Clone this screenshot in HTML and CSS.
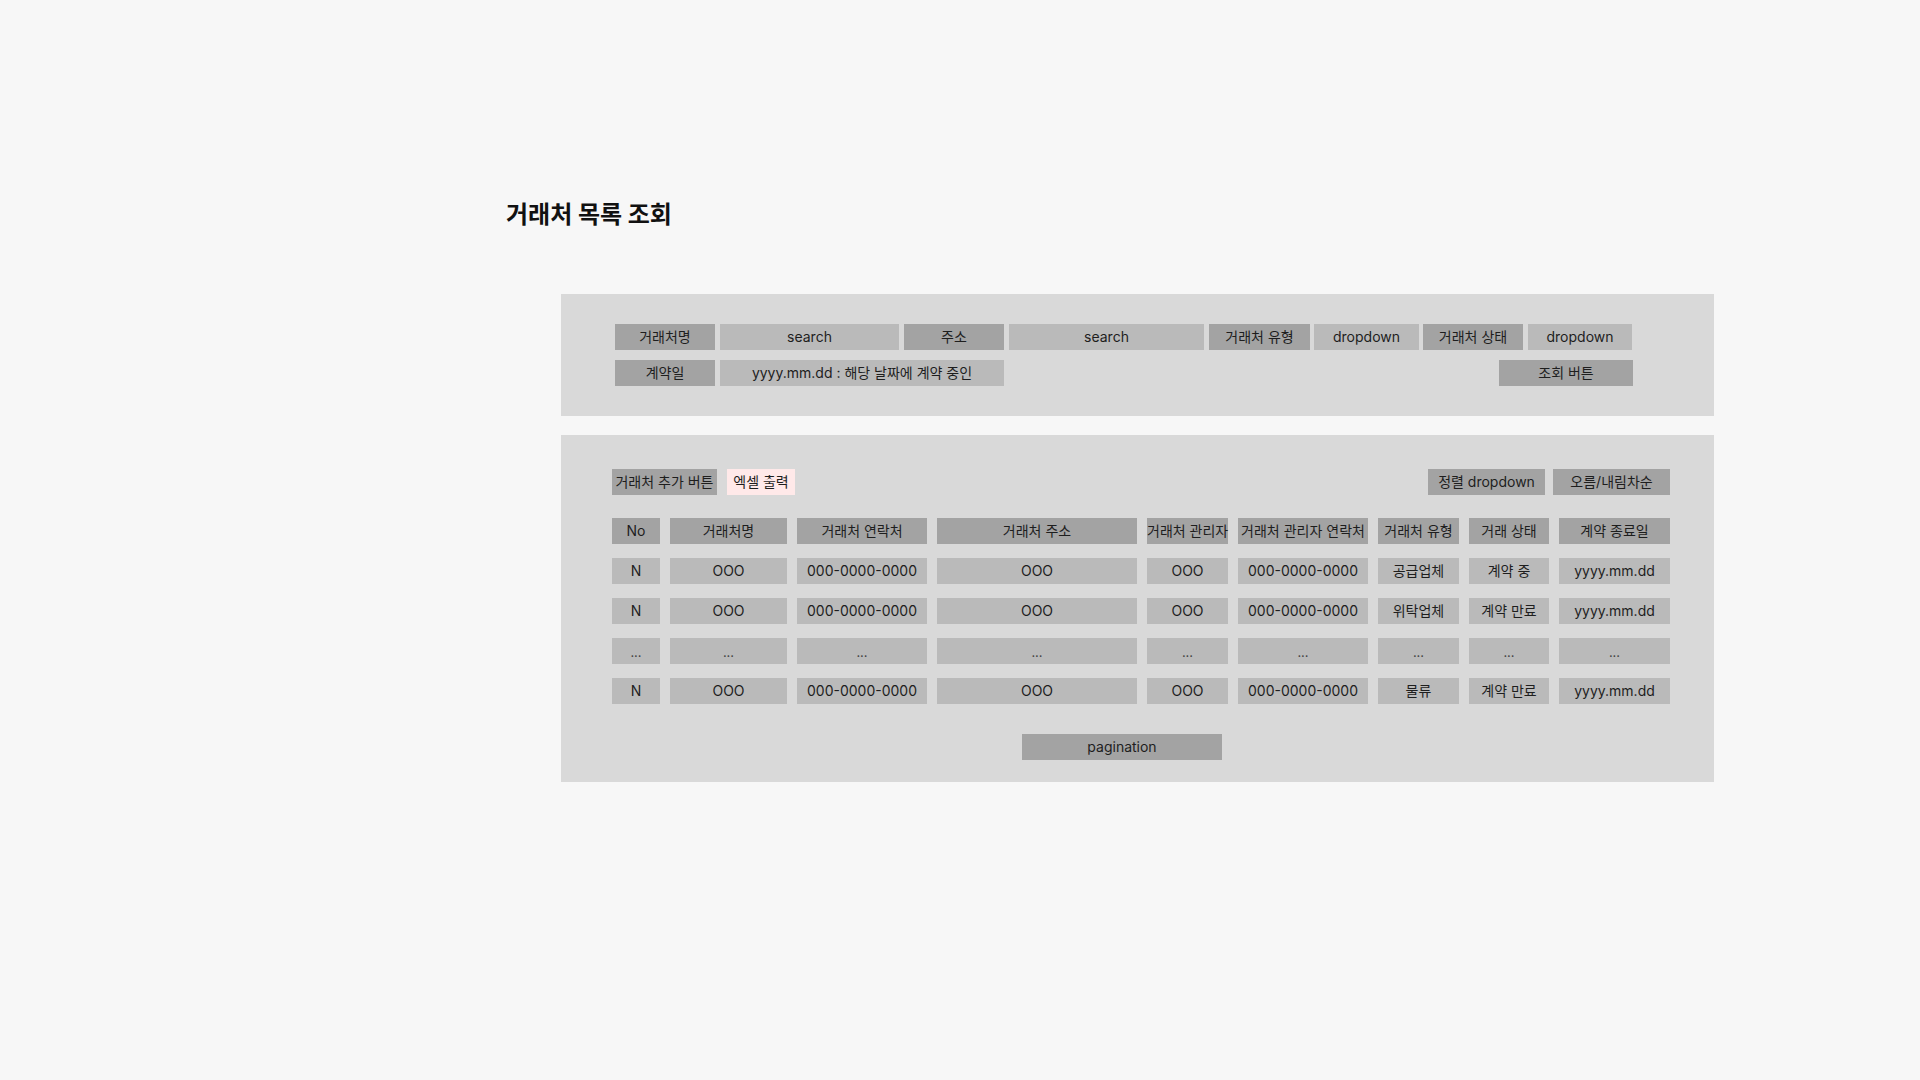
FILE: index.html
```html
<!DOCTYPE html>
<html lang="ko">
<head>
<meta charset="utf-8">
<title>거래처 목록 조회</title>
<link rel="stylesheet" href="styles.css">
</head>
<body>
<div class="page">
  <h1 class="title">거래처 목록 조회</h1>

  <section class="panel filter">
    <div class="frow">
      <div class="box dark w100">거래처명</div>
      <div class="box light w179">search</div>
      <div class="box dark w100">주소</div>
      <div class="box light w195">search</div>
      <div class="box dark w101 g4">거래처 유형</div>
      <div class="box light w105 g4">dropdown</div>
      <div class="box dark w100">거래처 상태</div>
      <div class="box light w104">dropdown</div>
    </div>
    <div class="frow">
      <div class="box dark w100">계약일</div>
      <div class="box light w284">yyyy.mm.dd : 해당 날짜에 계약 중인</div>
      <div class="box dark w134 push">조회 버튼</div>
    </div>
  </section>

  <section class="panel list">
    <div class="toolbar">
      <div class="tools-left">
        <div class="box dark w105">거래처 추가 버튼</div>
        <div class="box pink w68">엑셀 출력</div>
      </div>
      <div class="tools-right">
        <div class="box dark w117">정렬 dropdown</div>
        <div class="box dark w117">오름/내림차순</div>
      </div>
    </div>

    <div class="grid">
      <div class="box dark">No</div>
      <div class="box dark">거래처명</div>
      <div class="box dark">거래처 연락처</div>
      <div class="box dark">거래처 주소</div>
      <div class="box dark">거래처 관리자</div>
      <div class="box dark">거래처 관리자 연락처</div>
      <div class="box dark">거래처 유형</div>
      <div class="box dark">거래 상태</div>
      <div class="box dark">계약 종료일</div>

      <div class="box light">N</div>
      <div class="box light">OOO</div>
      <div class="box light">000-0000-0000</div>
      <div class="box light">OOO</div>
      <div class="box light">OOO</div>
      <div class="box light">000-0000-0000</div>
      <div class="box light">공급업체</div>
      <div class="box light">계약 중</div>
      <div class="box light">yyyy.mm.dd</div>

      <div class="box light">N</div>
      <div class="box light">OOO</div>
      <div class="box light">000-0000-0000</div>
      <div class="box light">OOO</div>
      <div class="box light">OOO</div>
      <div class="box light">000-0000-0000</div>
      <div class="box light">위탁업체</div>
      <div class="box light">계약 만료</div>
      <div class="box light">yyyy.mm.dd</div>

      <div class="box light dots">...</div>
      <div class="box light dots">...</div>
      <div class="box light dots">...</div>
      <div class="box light dots">...</div>
      <div class="box light dots">...</div>
      <div class="box light dots">...</div>
      <div class="box light dots">...</div>
      <div class="box light dots">...</div>
      <div class="box light dots">...</div>

      <div class="box light">N</div>
      <div class="box light">OOO</div>
      <div class="box light">000-0000-0000</div>
      <div class="box light">OOO</div>
      <div class="box light">OOO</div>
      <div class="box light">000-0000-0000</div>
      <div class="box light">물류</div>
      <div class="box light">계약 만료</div>
      <div class="box light">yyyy.mm.dd</div>
    </div>

    <div class="pager-row">
      <div class="box dark pager">pagination</div>
    </div>
  </section>
</div>
</body>
</html>
```

FILE: styles.css
```css
* { box-sizing: border-box; }

html, body {
  margin: 0;
  padding: 0;
  background: #f7f7f7;
}

body {
  font-family: "Inter", "Noto Sans CJK KR", "Noto Sans", sans-serif;
  font-size: 14px;
  color: #1e1e1e;
  width: 1920px;
  height: 1080px;
}

.page {
  padding: 199px 0 0 506px;
}

.title {
  margin: 0;
  font-size: 24px;
  line-height: 32px;
  font-weight: 700;
  color: #111;
}

.panel {
  background: #d9d9d9;
  margin-left: 55px;
  width: 1153px;
}

.filter {
  margin-top: 63px;
  height: 122px;
  padding: 30px 0 0 54px;
  display: flex;
  flex-direction: column;
  gap: 10px;
}

.frow {
  display: flex;
  gap: 5px;
  width: 1018px;
}

.box {
  height: 26px;
  line-height: 26px;
  text-align: center;
  white-space: nowrap;
  overflow: visible;
}

.dark { background: #a3a3a3; }
.light { background: #bababa; }
.pink { background: #ffe9e9; }

.dots { line-height: 28px; font-size: 13px; color: #444; }

.w68 { width: 68px; }
.w100 { width: 100px; }
.w101 { width: 101px; }
.w104 { width: 104px; }
.w105 { width: 105px; }
.w117 { width: 117px; }
.w134 { width: 134px; }
.w179 { width: 179px; }
.w195 { width: 195px; }
.w284 { width: 284px; }
.g4 { margin-right: -1px; }
.push { margin-left: auto; }

.list {
  margin-top: 19px;
  height: 347px;
  padding: 34px 44px 0 51px;
}

.toolbar {
  display: flex;
  justify-content: space-between;
  margin-bottom: 23px;
}

.tools-left {
  display: flex;
  gap: 10px;
}

.tools-right {
  display: flex;
  gap: 8px;
}

.grid {
  display: grid;
  grid-template-columns: 48px 117px 130px 200px 81px 130px 81px 80px 111px;
  grid-auto-rows: 26px;
  column-gap: 10px;
  row-gap: 14px;
}

.pager-row {
  display: flex;
  margin-top: 30px;
  padding-left: 410px;
}

.pager {
  width: 200px;
}
```
